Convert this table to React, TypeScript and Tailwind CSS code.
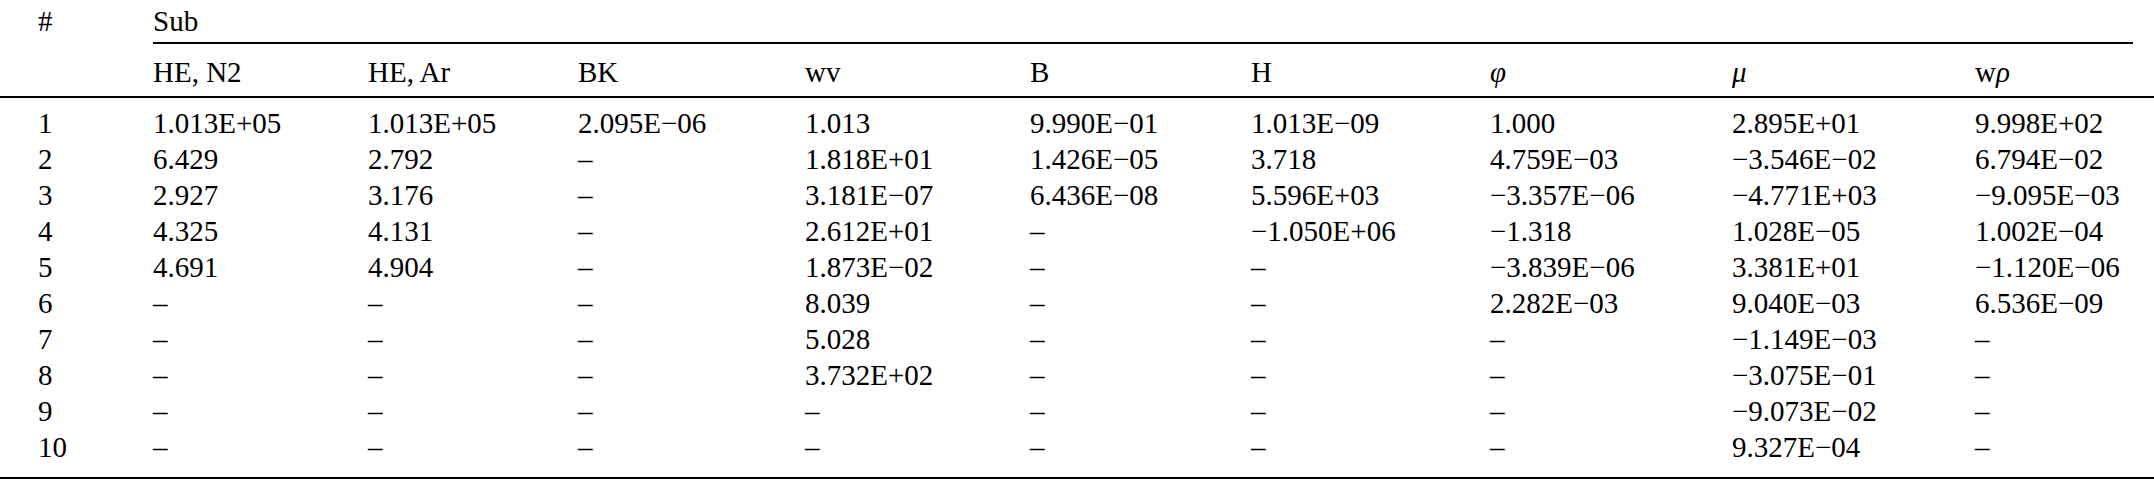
const heads = ["HE, N2", "HE, Ar", "BK", "wv", "B", "H"];

const rows: string[][] = [
  ["1", "1.013E+05", "1.013E+05", "2.095E−06", "1.013", "9.990E−01", "1.013E−09", "1.000", "2.895E+01", "9.998E+02"],
  ["2", "6.429", "2.792", "–", "1.818E+01", "1.426E−05", "3.718", "4.759E−03", "−3.546E−02", "6.794E−02"],
  ["3", "2.927", "3.176", "–", "3.181E−07", "6.436E−08", "5.596E+03", "−3.357E−06", "−4.771E+03", "−9.095E−03"],
  ["4", "4.325", "4.131", "–", "2.612E+01", "–", "−1.050E+06", "−1.318", "1.028E−05", "1.002E−04"],
  ["5", "4.691", "4.904", "–", "1.873E−02", "–", "–", "−3.839E−06", "3.381E+01", "−1.120E−06"],
  ["6", "–", "–", "–", "8.039", "–", "–", "2.282E−03", "9.040E−03", "6.536E−09"],
  ["7", "–", "–", "–", "5.028", "–", "–", "–", "−1.149E−03", "–"],
  ["8", "–", "–", "–", "3.732E+02", "–", "–", "–", "−3.075E−01", "–"],
  ["9", "–", "–", "–", "–", "–", "–", "–", "−9.073E−02", "–"],
  ["10", "–", "–", "–", "–", "–", "–", "–", "9.327E−04", "–"],
];

const cols = "grid grid-cols-[115px_215px_210px_227px_225px_221px_239px_242px_243px_1fr] pl-[38px]";

export default function App() {
  return (
    <div className="w-[2154px] h-[483px] bg-white text-black text-[29px] font-['Liberation_Serif',serif]">
      {/* Kepala tabel */}
      <div className="border-b-2 border-black">
        <div className={`${cols} pr-[21px]`}>
          <div className="leading-[42px]">#</div>
          <div className="col-span-9 leading-[42px] border-b-2 border-black">Sub</div>
        </div>
        <div className={`${cols} pt-[10px] pb-[6px] leading-[36px]`}>
          <div></div>
          {heads.map((h) => (
            <div key={h}>{h}</div>
          ))}
          <div className="italic">φ</div>
          <div className="italic">μ</div>
          <div>
            w<span className="italic">ρ</span>
          </div>
        </div>
      </div>

      {/* Isi tabel */}
      <div className="border-b-2 border-black pt-[7px] pb-[12px]">
        {rows.map((r) => (
          <div key={r[0]} className={`${cols} leading-[36px]`}>
            {r.map((c, i) => (
              <div key={i}>{c}</div>
            ))}
          </div>
        ))}
      </div>
    </div>
  );
}
